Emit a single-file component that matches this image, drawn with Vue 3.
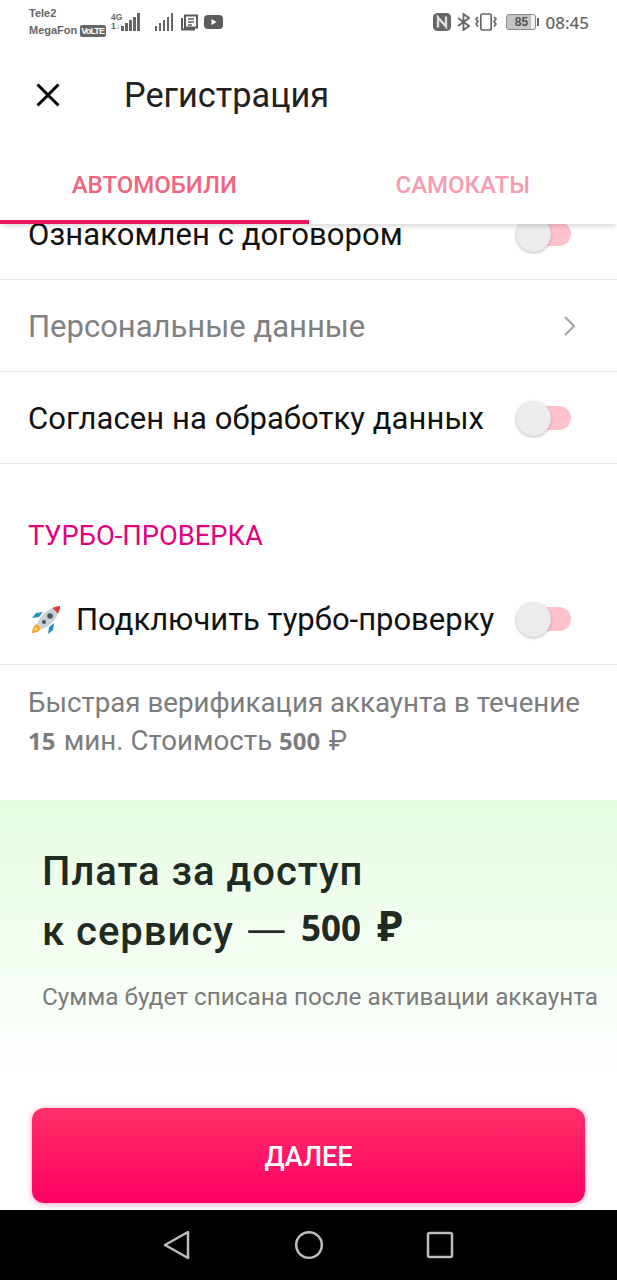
<script setup>
const bars = [5, 8, 11, 14, 18]
</script>

<template>
  <div class="screen">
    <div class="status">
      <div class="carriers">
        <span>Tele2</span>
        <span class="carrier-two">MegaFon <b class="volte">VoLTE</b></span>
      </div>
      <div class="net">
        <span class="net-type"><i>4G</i><i>1↓</i></span>
        <span class="signal"><u v-for="h in bars" :key="h" :style="{ height: h + 'px' }"></u></span>
      </div>
      <span class="signal second"><u v-for="h in bars" :key="h" :style="{ height: h + 'px' }"></u></span>
      <svg class="st-news" width="17" height="17" viewBox="0 0 17 17" fill="none" stroke="#5c5c5c" stroke-width="2">
        <path d="M4 1.500h12v12H4zM1 4v11.500h13" />
        <path d="M7 5h6M7 8h6M7 11h4" stroke-width="1.600" />
      </svg>
      <svg class="st-yt" width="19" height="14" viewBox="0 0 19 14">
        <rect width="19" height="14" rx="4" fill="#5c5c5c" />
        <path d="M7.500 4l5 3-5 3z" fill="#fff" />
      </svg>
      <div class="status-right">
        <svg width="18" height="18" viewBox="0 0 18 18" fill="none">
          <rect x="0" y="0" width="18" height="18" rx="4.500" fill="#666" />
          <path d="M5 14.500V4.500l8 9V3.500" stroke="#ddd" stroke-width="2.400" />
        </svg>
        <svg class="st-bt" width="13" height="18" viewBox="0 0 13 18" fill="none" stroke="#666" stroke-width="1.800">
          <path d="M1 5l11 8-5.500 4V1L12 5 1 13" />
        </svg>
        <svg class="st-vib" width="22" height="18" viewBox="0 0 22 18" fill="none" stroke="#666">
          <rect x="5.800" y="1" width="10.400" height="16" rx="1.500" stroke-width="1.700" />
          <path d="M3 4L1 6l2 2.500L1 11l2 2.500M19 4l2 2-2 2.500 2 2.500-2 2.500" stroke-width="1.700" />
        </svg>
        <div class="battery"><span class="battery-body">85</span><span class="battery-tip"></span></div>
        <span class="clock">08:45</span>
      </div>
    </div>

    <header class="header">
      <svg class="close" width="26" height="26" viewBox="0 0 26 26" fill="none" stroke="#000" stroke-width="3">
        <path d="M2.500 2.500l21 21M23.500 2.500l-21 21" />
      </svg>
      <h1>Регистрация</h1>
    </header>

    <nav class="tabs">
      <div class="tab active">АВТОМОБИЛИ</div>
      <div class="tab">САМОКАТЫ</div>
    </nav>

    <main class="content">
      <div class="scroller">
        <div class="row">
          <span class="row-text">Ознакомлен с договором</span>
          <span class="toggle"><span class="knob"></span></span>
        </div>
        <div class="row muted">
          <span class="row-text">Персональные данные</span>
          <svg width="14" height="22" viewBox="0 0 14 22" fill="none" stroke="#a8a8a8" stroke-width="2.200">
            <path d="M2 2l9 9-9 9" />
          </svg>
        </div>
        <div class="row">
          <span class="row-text">Согласен на обработку данных</span>
          <span class="toggle"><span class="knob"></span></span>
        </div>

        <h2 class="section">ТУРБО-ПРОВЕРКА</h2>

        <div class="row turbo">
          <span class="turbo-label row-text">
            <svg class="rocket" width="32" height="32" viewBox="0 0 32 32">
              <path d="M7 20c-3 1-5 6-5 9 3 0 8-2 9-5z" fill="#f7a02c" />
              <path d="M6 23c-1 1-2 3-2 4 1 0 3-1 4-2z" fill="#fde07a" />
              <path d="M9 13l-7 1 4-5 7-1zM19 23l-1 7 5-4 1-7z" fill="#2f8fc4" />
              <path d="M7 20C10 12 17 5 25 3l4 4c-2 8-9 15-17 18z" fill="#c9d0d6" />
              <path d="M22.500 4l5.500 5.500C29.500 7 30 4.500 30 2c-2.500 0-5 .8-7.500 2z" fill="#e53935" />
              <circle cx="20" cy="12" r="2.800" fill="#4a5560" />
              <circle cx="14" cy="18" r="2" fill="#4a5560" />
            </svg>
            Подключить турбо-проверку
          </span>
          <span class="toggle"><span class="knob"></span></span>
        </div>

        <p class="hint">
          Быстрая верификация аккаунта в течение
          <b>15</b> мин. Стоимость <b>500</b> ₽
        </p>

        <section class="price">
          <div class="price-title">Плата за доступ</div>
          <div class="price-title">к сервису <span class="dash">—</span> <b>500 <span class="rub">₽</span></b></div>
          <p>Сумма будет списана после активации аккаунта</p>
        </section>
      </div>
      <button class="next">ДАЛЕЕ</button>
    </main>

    <footer class="nav">
      <svg width="28" height="30" viewBox="0 0 28 30" fill="none" stroke="#bdbdbd" stroke-width="2.500" stroke-linejoin="round">
        <path d="M25 2v26L2 15z" />
      </svg>
      <svg width="30" height="30" viewBox="0 0 30 30" fill="none" stroke="#bdbdbd" stroke-width="2.500">
        <circle cx="15" cy="15" r="12.800" />
      </svg>
      <svg width="28" height="28" viewBox="0 0 28 28" fill="none" stroke="#bdbdbd" stroke-width="2.500" stroke-linejoin="round">
        <rect x="2" y="2" width="24" height="24" rx="1.500" />
      </svg>
    </footer>
  </div>
</template>

<style scoped>
.screen {
  width: 617px;
  height: 1280px;
  display: flex;
  flex-direction: column;
  overflow: hidden;
  background: #fff;
  font-family: Roboto, "Noto Sans", sans-serif;
  color: #111;
}

.status {
  height: 50px;
  flex: none;
  display: flex;
  align-items: center;
  padding: 0 28px 6px 29px;
  color: #666;
  box-sizing: border-box;
}
.carriers {
  display: flex;
  flex-direction: column;
  gap: 5px;
  width: 76px;
  font: bold 11px "Liberation Sans", sans-serif;
}
.carrier-two {
  white-space: nowrap;
}
.volte {
  display: inline-block;
  background: #666;
  color: #fff;
  font-size: 9px;
  line-height: 12px;
  letter-spacing: -0.9px;
  border-radius: 2px;
  padding: 0 2px 0 1px;
  vertical-align: middle;
}
.net {
  display: flex;
  align-items: flex-end;
  margin-left: 6px;
}
.net-type {
  display: flex;
  flex-direction: column;
  width: 10px;
  font: bold 8.500px/9px "Liberation Sans", sans-serif;
}
.net-type i {
  font-style: normal;
}
.signal {
  display: flex;
  align-items: flex-end;
  gap: 1.500px;
  height: 18px;
}
.signal u {
  display: block;
  width: 2.500px;
  background: #666;
}
.second {
  margin-left: 15px;
}
.st-news {
  margin-left: 8px;
}
.st-yt {
  margin-left: 6px;
}
.status-right {
  margin-left: auto;
  display: flex;
  align-items: center;
  gap: 5px;
}
.st-bt {
  margin-left: 1px;
}
.battery {
  display: flex;
  align-items: center;
  gap: 1px;
  margin-left: 4px;
}
.battery-body {
  width: 30px;
  height: 16px;
  box-sizing: border-box;
  border: 1px solid #8a8a8a;
  border-radius: 3px;
  background: linear-gradient(90deg, #c4c4c4 84%, #f2f2f2 84%);
  font: bold 12px/14px "Liberation Sans", sans-serif;
  text-align: center;
  color: #555;
}
.battery-tip {
  width: 2px;
  height: 8px;
  background: #666;
}
.clock {
  font: 500 17px "Noto Sans", sans-serif;
  color: #666;
  margin-left: 1px;
}

.header {
  height: 90px;
  flex: none;
  display: flex;
  align-items: center;
  padding-left: 35px;
}
.close {
  margin-right: 63px;
}
h1 {
  margin: 0;
  font-size: 34.300px;
  font-weight: 400;
  color: #212121;
}

.tabs {
  height: 84px;
  flex: none;
  display: flex;
  position: relative;
  z-index: 2;
  background: #fff;
  box-shadow: 0 4px 5px -2px rgba(0, 0, 0, 0.16);
}
.tab {
  width: 50%;
  box-sizing: border-box;
  padding-top: 10px;
  border-bottom: 4px solid transparent;
  display: flex;
  align-items: center;
  justify-content: center;
  font-size: 24px;
  font-weight: 500;
  color: #f49cb0;
}
.tab.active {
  color: #ee6680;
  border-bottom-color: #e8175f;
}

.content {
  flex: 1;
  min-height: 0;
  position: relative;
  overflow: hidden;
}
.scroller {
  margin-top: -36px;
}
.row {
  height: 92px;
  box-sizing: border-box;
  border-bottom: 1px solid #e3e3e3;
  padding: 0 46px 0 28px;
  display: flex;
  align-items: center;
  justify-content: space-between;
  font-size: 31px;
  letter-spacing: 0.080px;
}
.row-text {
  padding-top: 2px;
}
.row.muted {
  color: #808080;
  padding-right: 40px;
  letter-spacing: 0;
}
.toggle {
  width: 55px;
  height: 24px;
  position: relative;
  flex: none;
  display: block;
  border-radius: 12px;
  background: #ffc2cd;
}
.knob {
  position: absolute;
  left: 0;
  top: -5px;
  width: 35px;
  height: 35px;
  border-radius: 50%;
  background: #ececec;
  box-shadow: 0 1px 3px rgba(0, 0, 0, 0.28);
}
.section {
  margin: 0;
  padding: 54px 28px 0;
  height: 109px;
  box-sizing: border-box;
  font-size: 27.300px;
  font-weight: 400;
  line-height: 36px;
  color: #e5007d;
}
.turbo {
  padding-left: 30px;
  letter-spacing: 0;
}
.turbo-label {
  display: flex;
  align-items: center;
  gap: 14px;
}
.hint {
  margin: 0;
  padding: 19px 28px 0;
  height: 135px;
  box-sizing: border-box;
  font-size: 27.700px;
  line-height: 38px;
  color: #7c7c7c;
}
.hint b {
  font: bold 24px "Noto Sans", sans-serif;
  margin-right: 1.500px;
}
.price {
  height: 280px;
  box-sizing: border-box;
  padding: 42px 20px 0 42px;
  background: linear-gradient(#e6fde3, #fff);
}
.price-title {
  font-size: 40px;
  line-height: 60px;
  font-weight: 500;
  letter-spacing: 1px;
  color: #1f2a20;
  white-space: nowrap;
}
.dash {
  position: relative;
  top: 7px;
  font-size: 56px;
  font-weight: 300;
  line-height: 0;
  letter-spacing: 0;
}
.price-title b {
  position: relative;
  top: -4px;
  margin-left: 2px;
  font: bold 35px "Noto Sans", sans-serif;
  letter-spacing: 0;
  word-spacing: 7px;
}
.rub {
  font-size: 42px;
  line-height: 0;
}
.price p {
  margin: 20px 0 0;
  font-size: 24.300px;
  color: #7b7b7b;
  white-space: nowrap;
}
.next {
  position: absolute;
  left: 32px;
  top: 884px;
  width: 553px;
  height: 95px;
  padding-top: 3px;
  border: none;
  border-radius: 12px;
  background: linear-gradient(#ff3068, #ff0062);
  box-shadow: 0 1px 6px rgba(255, 0, 98, 0.4);
  color: #fff;
  font: 500 27px Roboto, sans-serif;
}

.nav {
  height: 70px;
  flex: none;
  background: #000;
  display: flex;
  align-items: center;
  justify-content: center;
  gap: 102.500px;
}
</style>

<style>
body {
  background: #fff;
}
</style>
